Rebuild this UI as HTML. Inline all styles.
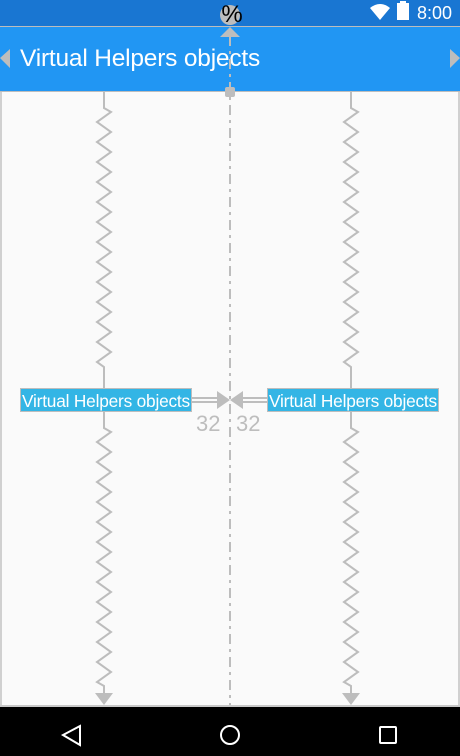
<!DOCTYPE html>
<html><head><style>
body{margin:0;width:460px;height:756px;overflow:hidden;background:#fafafa;font-family:"Liberation Sans",Roboto,sans-serif;position:relative}
.sb{position:absolute;left:0;top:0;width:460px;height:26px;background:#1976d2}
.ab{position:absolute;left:0;top:26px;width:460px;height:66px;background:#2196f3;border-top:1px solid #bdbdbd;border-bottom:1px solid #bdbdbd;box-sizing:border-box}
.nav{position:absolute;left:0;top:707px;width:460px;height:49px;background:#000}
.tv{position:absolute;top:388px;height:24px;background:#33b5e5;border:1px solid #bdbdbd;box-sizing:border-box;color:#fff;font-size:17.3px;line-height:24px;white-space:nowrap;overflow:hidden;letter-spacing:-0.2px}
</style></head><body>
<div class="sb"></div>
<div class="ab"><div style="position:absolute;left:20px;top:18px;color:#fff;font-size:24.5px;letter-spacing:-0.2px">Virtual Helpers objects</div></div>
<div style="position:absolute;left:0;top:92px;width:2px;height:615px;background:#d0d0d0"></div>
<div style="position:absolute;left:458px;top:92px;width:2px;height:615px;background:#d0d0d0"></div>
<div style="position:absolute;left:0;top:705px;width:460px;height:2px;background:#c8c8c8"></div>
<div class="nav"></div>
<div style="position:absolute;left:417px;top:3px;color:#fff;font-size:18px">8:00</div>
<div class="tv" style="left:20px;width:172px;padding-left:1px">Virtual Helpers objects</div>
<div class="tv" style="left:267px;width:172px;padding-left:1px">Virtual Helpers objects</div>
<svg width="460" height="756" style="position:absolute;left:0;top:0" xmlns="http://www.w3.org/2000/svg">
<g fill="none" stroke="#bdbdbd" stroke-width="2">
<polyline points="104,92 104,108 111,112 97,122 111,132 97,142 111,152 97,162 111,172 97,182 111,192 97,202 111,212 97,222 111,232 97,242 111,252 97,262 111,272 97,282 111,292 97,302 111,312 97,322 111,332 97,342 111,352 97,362 104,367 104,388"/>
<polyline transform="translate(247,0)" points="104,92 104,108 111,112 97,122 111,132 97,142 111,152 97,162 111,172 97,182 111,192 97,202 111,212 97,222 111,232 97,242 111,252 97,262 111,272 97,282 111,292 97,302 111,312 97,322 111,332 97,342 111,352 97,362 104,367 104,388"/>
<polyline points="104,412 104,428 111,432 97,442 111,452 97,462 111,472 97,482 111,492 97,502 111,512 97,522 111,532 97,542 111,552 97,562 111,572 97,582 111,592 97,602 111,612 97,622 111,632 97,642 111,652 97,662 111,672 97,682 104,686 104,694"/>
<polyline transform="translate(247,0)" points="104,412 104,428 111,432 97,442 111,452 97,462 111,472 97,482 111,492 97,502 111,512 97,522 111,532 97,542 111,552 97,562 111,572 97,582 111,592 97,602 111,612 97,622 111,632 97,642 111,652 97,662 111,672 97,682 104,686 104,694"/>
<line x1="230" y1="36" x2="230" y2="705" stroke-dasharray="10,5,3,5"/>
<line x1="192" y1="398" x2="218" y2="398"/><line x1="192" y1="402" x2="218" y2="402"/>
<line x1="242" y1="398" x2="268" y2="398"/><line x1="242" y1="402" x2="268" y2="402"/>
</g>
<g fill="#bdbdbd">
<polygon points="95,693 113,693 104,705"/><polygon points="342,693 360,693 351,705"/>
<polygon points="220,37 240,37 230,27"/>
<rect x="225" y="87" width="10" height="10" rx="2"/>
<polygon points="217,391 217,409 230,400"/><polygon points="243,391 243,409 230,400"/>
<polygon points="0,58 10,49 10,68"/><polygon points="460,58 450,49 450,68"/>
<circle cx="230" cy="15" r="10"/>
</g>
<text x="232" y="22" font-size="24" font-family="Liberation Sans" text-anchor="middle" fill="#000">%</text>
<text x="196" y="431" font-size="22" fill="#bdbdbd" font-family="Liberation Sans">32</text>
<text x="236" y="431" font-size="22" fill="#bdbdbd" font-family="Liberation Sans">32</text>
<path d="M370 8 Q380 0 390 8 L380 20 Z" fill="#fff"/>
<rect x="397" y="3" width="12" height="17" fill="#fff"/><rect x="400" y="1" width="6" height="3" fill="#fff"/>
<g fill="none" stroke="#fff" stroke-width="2">
<path d="M80 726 L63 735 L80 745 Z"/>
<circle cx="230" cy="735" r="9"/>
<rect x="380" y="727" width="16" height="16" rx="1"/>
</g>
</svg>
</body></html>
